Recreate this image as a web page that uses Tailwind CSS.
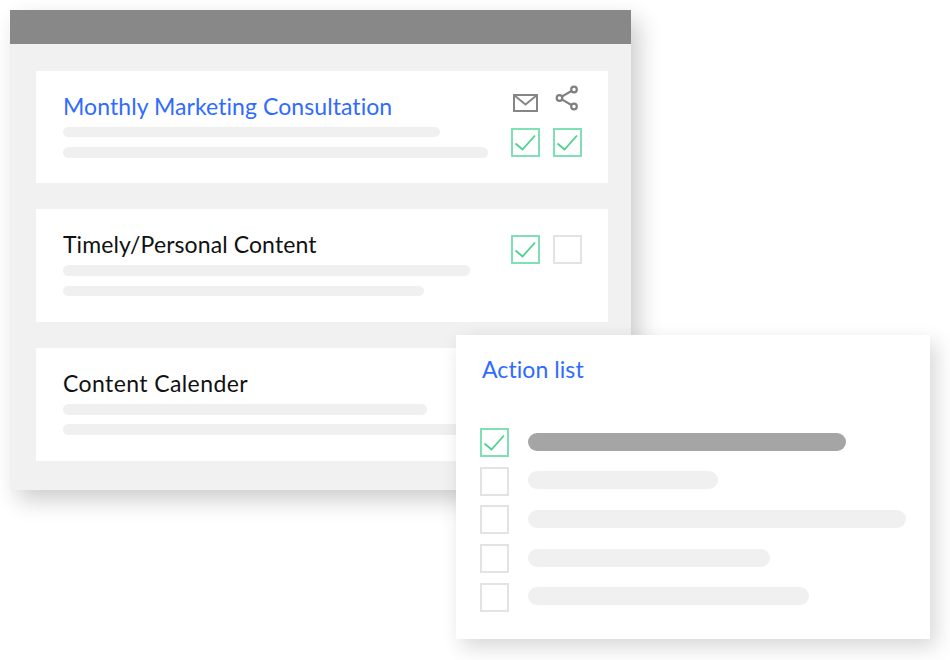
<!DOCTYPE html>
<html lang="en">
<head>
    <meta charset="UTF-8">
    <meta name="viewport" content="width=device-width, initial-scale=1.0">
    <title>Action list</title>
    <script src="https://cdn.jsdelivr.net/npm/@tailwindcss/browser@4"></script>
</head>
<body class="bg-white font-['Lato',sans-serif] overflow-hidden">
    <div class="relative w-[950px] h-[660px] pt-[10px] pl-[10px]">

        <!-- main window -->
        <div class="w-[621px] h-[480px] bg-[#f1f1f1] shadow-[8px_10px_22px_rgba(0,0,0,0.2)]">
            <div class="h-[34px] bg-[#888888]"></div>
            <div class="flex flex-col gap-[26px] pl-[26px] pr-[23px] pt-[27px]">

                <div class="relative h-[112px] bg-white pl-[27px] pt-[21px]">
                    <h2 class="text-[23px] leading-[28px] tracking-[0.07px] text-[#2f6bff]">Monthly Marketing Consultation</h2>
                    <div class="mt-[7px] flex flex-col gap-[10px]">
                        <div class="h-[10px] w-[377px] rounded-full bg-[#f0f0f0]"></div>
                        <div class="h-[11px] w-[425px] rounded-full bg-[#f0f0f0]"></div>
                    </div>
                    <svg class="absolute left-[477px] top-[23px]" width="25" height="18" viewBox="0 0 25 18" fill="none" stroke="#868686" stroke-width="2">
                        <rect x="1" y="1" width="23" height="16"/>
                        <path d="M1.5 1.5 L12.5 10.5 L23.5 1.5"/>
                    </svg>
                    <svg class="absolute left-[519px] top-[14px]" width="25" height="26" viewBox="0 0 25 26" fill="none" stroke="#808080" stroke-width="2.2">
                        <circle cx="4.5" cy="13" r="2.8"/>
                        <circle cx="19" cy="4.5" r="2.8"/>
                        <circle cx="19" cy="21.5" r="2.8"/>
                        <path d="M7.2 11.4 L16.4 6 M7.2 14.6 L16.4 20"/>
                    </svg>
                    <div class="absolute left-[475px] top-[57px] flex gap-[13px]">
                        <div class="flex size-[29px] items-center justify-center border-2 border-[#7fe0b4]">
                            <svg width="23" height="17" viewBox="0 0 23 17" fill="none" stroke="#4fd08f" stroke-width="1.8"><path d="M1.5 9.5 L8.5 15.5 L21 1.5"/></svg>
                        </div>
                        <div class="flex size-[29px] items-center justify-center border-2 border-[#7fe0b4]">
                            <svg width="23" height="17" viewBox="0 0 23 17" fill="none" stroke="#4fd08f" stroke-width="1.8"><path d="M1.5 9.5 L8.5 15.5 L21 1.5"/></svg>
                        </div>
                    </div>
                </div>

                <div class="relative h-[113px] bg-white pl-[27px] pt-[21px]">
                    <h2 class="text-[23px] leading-[28px] tracking-[0.1px] text-[#111111]">Timely/Personal Content</h2>
                    <div class="mt-[7px] flex flex-col gap-[10px]">
                        <div class="h-[11px] w-[407px] rounded-full bg-[#f0f0f0]"></div>
                        <div class="h-[10px] w-[361px] rounded-full bg-[#f0f0f0]"></div>
                    </div>
                    <div class="absolute left-[475px] top-[26px] flex gap-[13px]">
                        <div class="flex size-[29px] items-center justify-center border-2 border-[#7fe0b4]">
                            <svg width="23" height="17" viewBox="0 0 23 17" fill="none" stroke="#4fd08f" stroke-width="1.8"><path d="M1.5 9.5 L8.5 15.5 L21 1.5"/></svg>
                        </div>
                        <div class="size-[29px] border-2 border-[#e3e3e3]"></div>
                    </div>
                </div>

                <div class="h-[113px] bg-white pl-[27px] pt-[21px]">
                    <h2 class="text-[23px] leading-[28px] tracking-[0.4px] text-[#111111]">Content Calender</h2>
                    <div class="mt-[7px] flex flex-col gap-[9px]">
                        <div class="h-[11px] w-[364px] rounded-full bg-[#f0f0f0]"></div>
                        <div class="h-[11px] w-[400px] rounded-full bg-[#f0f0f0]"></div>
                    </div>
                </div>

            </div>
        </div>

        <!-- action list panel, sits over the window -->
        <div class="absolute left-[456px] top-[335px] w-[474px] h-[304px] bg-white pl-[24px] pt-[20px] shadow-[6px_8px_20px_rgba(0,0,0,0.16)]">
            <h3 class="ml-[2px] text-[23px] leading-[28px] tracking-[0.07px] text-[#2f6bff]">Action list</h3>
            <div class="mt-[45px] flex flex-col gap-[9.7px]">
                <div class="flex items-center gap-[19px]">
                    <div class="flex size-[29px] items-center justify-center border-2 border-[#7fe0b4]">
                        <svg width="23" height="17" viewBox="0 0 23 17" fill="none" stroke="#4fd08f" stroke-width="1.8"><path d="M1.5 9.5 L8.5 15.5 L21 1.5"/></svg>
                    </div>
                    <div class="mb-[2px] h-[18px] w-[318px] rounded-full bg-[#a5a5a5]"></div>
                </div>
                <div class="flex items-center gap-[19px]">
                    <div class="size-[29px] border-2 border-[#e3e3e3]"></div>
                    <div class="mb-[2px] h-[18px] w-[190px] rounded-full bg-[#f0f0f0]"></div>
                </div>
                <div class="flex items-center gap-[19px]">
                    <div class="size-[29px] border-2 border-[#e3e3e3]"></div>
                    <div class="mb-[2px] h-[18px] w-[378px] rounded-full bg-[#f0f0f0]"></div>
                </div>
                <div class="flex items-center gap-[19px]">
                    <div class="size-[29px] border-2 border-[#e3e3e3]"></div>
                    <div class="mb-[2px] h-[18px] w-[242px] rounded-full bg-[#f0f0f0]"></div>
                </div>
                <div class="flex items-center gap-[19px]">
                    <div class="size-[29px] border-2 border-[#e3e3e3]"></div>
                    <div class="mb-[2px] h-[18px] w-[281px] rounded-full bg-[#f0f0f0]"></div>
                </div>
            </div>
        </div>

    </div>
</body>
</html>
